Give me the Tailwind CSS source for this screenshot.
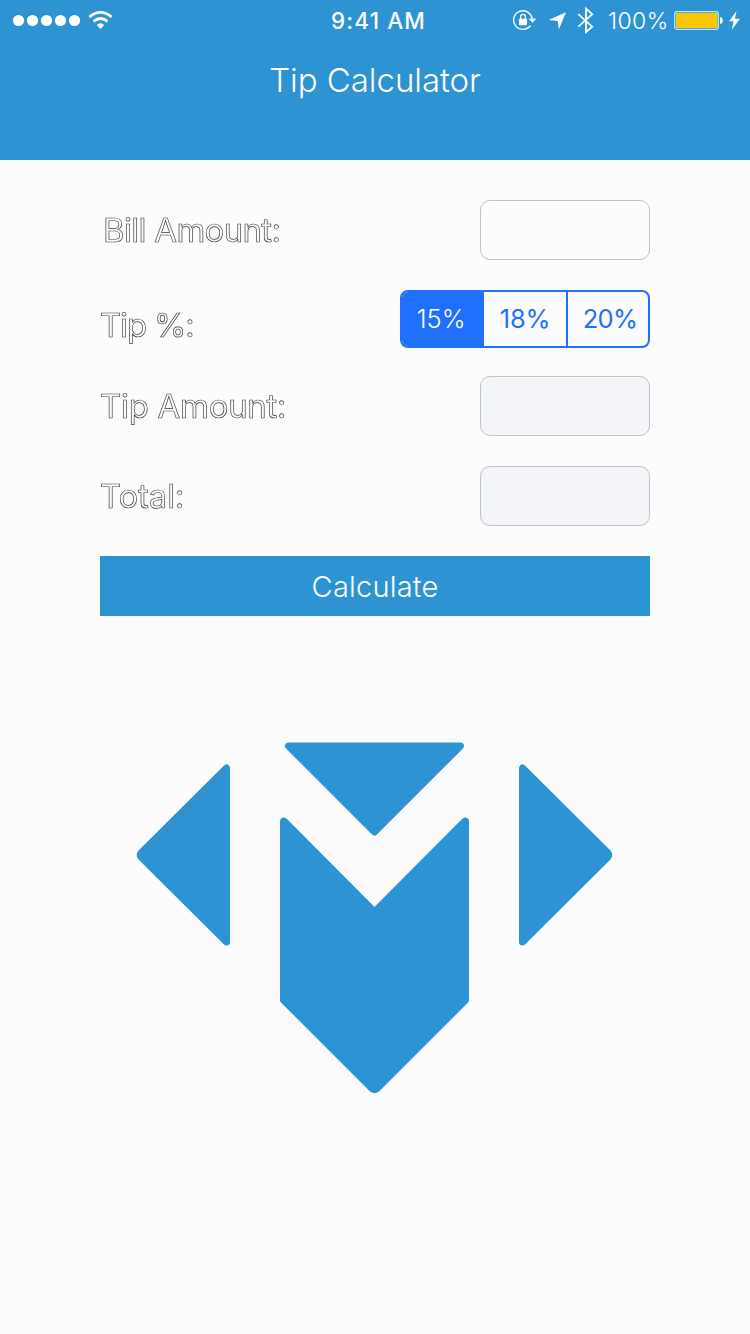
<!DOCTYPE html>
<html lang="en">
<head>
<meta charset="utf-8">
<title>Tip Calculator</title>
<script src="https://cdn.jsdelivr.net/npm/@tailwindcss/browser@4"></script>
</head>
<body class="w-[750px] h-[1334px] overflow-hidden bg-[#fcfcfd] font-['Inter',sans-serif]">
<header class="h-40 bg-[#2d93d3] text-white">
  <div class="grid h-10 grid-cols-[330px_1fr_242px]">
    <svg class="h-10 w-[130px]" viewBox="0 0 130 40" fill="#fff">
      <circle cx="18.5" cy="20.5" r="5.6"/><circle cx="32.5" cy="20.5" r="5.6"/><circle cx="46.5" cy="20.5" r="5.6"/><circle cx="60.5" cy="20.5" r="5.6"/><circle cx="74.5" cy="20.5" r="5.6"/>
      <path d="M89.300 17 Q100.500 7.700 111.700 17" fill="none" stroke="#fff" stroke-width="2.800"/>
      <path d="M93.500 21.400 Q100.500 15.600 107.500 21.400" fill="none" stroke="#fff" stroke-width="2.800"/>
      <path d="M96.800 25.100 Q100.500 21.600 104.200 25.100 L100.500 29 Z"/>
    </svg>
    <div class="pl-px text-[22.500px] leading-[41px] font-medium tracking-[1.150px] whitespace-nowrap">9:41 AM</div>
    <div class="flex">
      <svg class="h-10 w-[100px]" viewBox="508 0 100 40" fill="none" stroke="#fff">
        <path d="M530.500 25.500 A9.300 9.300 0 1 1 532.200 19" stroke-width="1.400"/>
        <path d="M528.700 18.700 H536.200 L532.500 22.800 Z" fill="#fff" stroke="none"/>
        <rect x="519" y="18.800" width="8" height="6.500" rx=".7" fill="#fff" stroke="none"/>
        <path d="M520.600 19 V16.700 A2.400 2.400 0 0 1 525.400 16.700 V19" stroke-width="1.300"/>
        <path d="M548.500 20 L566 12.300 L558.800 29.500 L557.700 20.900 Z" fill="#fff" stroke="none"/>
        <path d="M578.300 14.200 L592.200 26.700 L586 32 V8.500 L592.200 14.200 L578.300 26.700" stroke-width="1.800"/>
      </svg>
      <div class="w-[66px] text-[23px] leading-[42px] font-light tracking-[0.400px] whitespace-nowrap">100%</div>
      <svg class="h-10 w-[72px]" viewBox="674 0 72 40">
        <rect x="674.700" y="11.700" width="43.600" height="17.600" rx="2.500" fill="none" stroke="#b4ecff" stroke-width="1.200"/>
        <rect x="676" y="13" width="41.500" height="15" rx="1" fill="#fac800"/>
        <path d="M720 17 C723.800 17.400 723.800 23.600 720 24 Z" fill="#fff"/>
        <path d="M736.500 11 L729 21.300 H733.600 L731.800 29.800 L740 18.800 H734.900 Z" fill="#fff"/>
      </svg>
    </div>
  </div>
  <h1 class="h-20 text-center text-[33px] leading-[80px] font-light tracking-[-0.050px]">Tip Calculator</h1>
</header>
<main class="px-[100px] pt-10">
  <div class="flex h-[60px] items-center justify-between">
    <label class="pt-0.5 pl-[3px] text-[33px] font-normal tracking-[-0.700px] text-[#fcfcfd] will-change-transform [-webkit-text-stroke:0.650px_#333]">Bill Amount:</label>
    <div class="h-[60px] w-[170px] rounded-[10px] border border-[#bfc0c3]"></div>
  </div>
  <div class="mt-[30px] flex h-[58px] justify-between">
    <label class="pt-[11px] text-[33px] font-normal tracking-[-1.200px] text-[#fcfcfd] will-change-transform [-webkit-text-stroke:0.650px_#333]">Tip %:</label>
    <div class="grid h-[58px] w-[250px] grid-cols-[82px_84px_80px] overflow-hidden rounded-[8px] border-2 border-[#1f70ff] text-center text-[25.500px] leading-[54px] text-[#1f70ff]">
      <div class="bg-[#1f70ff] pr-1 font-light text-white">15%</div>
      <div class="border-r-2 border-[#1f70ff] tracking-[-0.300px]">18%</div>
      <div class="pl-1 tracking-[-0.800px]">20%</div>
    </div>
  </div>
  <div class="mt-7 flex h-[60px] items-center justify-between">
    <label class="pt-0.5 text-[33px] font-normal tracking-[-0.300px] text-[#fcfcfd] will-change-transform [-webkit-text-stroke:0.650px_#333]">Tip Amount:</label>
    <div class="h-[60px] w-[170px] rounded-[10px] border border-[#bfc2c6] bg-[#f3f5f8]"></div>
  </div>
  <div class="mt-[30px] flex h-[60px] items-center justify-between">
    <label class="pt-0.5 text-[33px] font-normal tracking-[-0.200px] text-[#fcfcfd] will-change-transform [-webkit-text-stroke:0.650px_#333]">Total:</label>
    <div class="h-[60px] w-[170px] rounded-[10px] border border-[#bfc2c6] bg-[#f3f5f8]"></div>
  </div>
  <button class="mt-[30px] block h-[60px] w-full bg-[#2d93d3] text-[29px] leading-[62px] font-light tracking-[0.200px] text-white">Calculate</button>
  <svg class="mt-[114px] ml-[27px] h-[380px] w-[500px]" viewBox="127 730 500 380" fill="#2d93d3" stroke="#2d93d3" stroke-width="7" stroke-linejoin="round">
    <path d="M288.500 746 H460.500 L374.500 832 Z"/>
    <path d="M226.500 768 V942 L141 857 Q139.500 855 141 853 Z"/>
    <path d="M522.500 768 V942 L608 857 Q609.500 855 608 853 Z"/>
    <path stroke="none" d="M280 821.500 Q280 818 283.500 817.500 Q285.500 817.500 287 819 L374.500 907 L462 819 Q463.500 817.500 465.500 817.500 Q469 818 469 821.500 V1000.500 Q469 1001.500 468 1002.500 L379 1091.500 Q374.500 1095 370 1091.500 L281 1002.500 Q280 1001.500 280 1000.500 Z"/>
  </svg>
</main>
</body>
</html>
